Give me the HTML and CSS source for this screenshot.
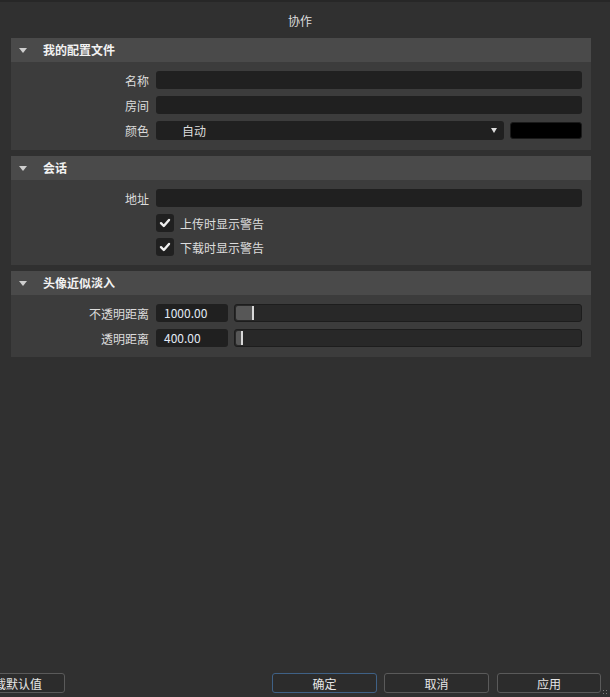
FILE: index.html
```html
<!DOCTYPE html>
<html lang="zh-CN">
<head>
  <meta charset="UTF-8" />
  <title>协作</title>
  <link rel="stylesheet" href="styles.css">
</head>
<body>
  <div class="dialog">
    <div class="topline"></div>
    <div class="title">协作</div>

    <div class="section">
      <div class="section-head"><span class="arrow"></span>我的配置文件</div>
      <div class="section-body">
        <div class="row">
          <label>名称</label>
          <div class="input"></div>
        </div>
        <div class="row">
          <label>房间</label>
          <div class="input"></div>
        </div>
        <div class="row row-tall">
          <label>颜色</label>
          <div class="color-ctrl">
            <div class="combo">自动<span class="combo-arrow"></span></div>
            <div class="swatch"></div>
          </div>
        </div>
      </div>
    </div>

    <div class="section">
      <div class="section-head"><span class="arrow"></span>会话</div>
      <div class="section-body session">
        <div class="row">
          <label>地址</label>
          <div class="input"></div>
        </div>
        <div class="row">
          <label></label>
          <div class="check"><span class="box"><svg viewBox="0 0 18 18" width="18" height="18"><path d="M5 9.2 L7.8 12 L13 6" fill="none" stroke="#eee" stroke-width="2.4" stroke-linecap="round" stroke-linejoin="round"/></svg></span>上传时显示警告</div>
        </div>
        <div class="row row-close">
          <label></label>
          <div class="check"><span class="box"><svg viewBox="0 0 18 18" width="18" height="18"><path d="M5 9.2 L7.8 12 L13 6" fill="none" stroke="#eee" stroke-width="2.4" stroke-linecap="round" stroke-linejoin="round"/></svg></span>下载时显示警告</div>
        </div>
      </div>
    </div>

    <div class="section">
      <div class="section-head"><span class="arrow"></span>头像近似淡入</div>
      <div class="section-body">
        <div class="row">
          <label>不透明距离</label>
          <div class="slider-ctrl">
            <div class="num">1000.00</div>
            <div class="slider"><div class="fill" style="width: 16px"></div><div class="handle"></div></div>
          </div>
        </div>
        <div class="row">
          <label>透明距离</label>
          <div class="slider-ctrl">
            <div class="num">400.00</div>
            <div class="slider"><div class="fill" style="width: 5px"></div><div class="handle"></div></div>
          </div>
        </div>
      </div>
    </div>

    <div class="footer">
      <button class="btn btn-defaults">载默认值</button>
      <div class="footer-right">
        <button class="btn btn-ok">确定</button>
        <button class="btn btn-cancel">取消</button>
        <button class="btn btn-apply">应用</button>
      </div>
    </div>
    <div class="grip"></div>
  </div>
</body>
</html>
```

FILE: styles.css
```css
body {
  margin: 0;
  background-color: #303030;
  color: #dcdcdc;
  font-family: "Noto Sans CJK SC", "Liberation Sans", sans-serif;
  font-size: 12px;
}
.dialog {
  height: 697px;
  display: flex;
  flex-direction: column;
  position: relative;
  overflow: hidden;
}
.topline {
  height: 2px;
  background-color: #272727;
}
.title {
  height: 36px;
  line-height: 38px;
  text-align: center;
  padding-right: 10px;
  color: #dedede;
}
.section {
  margin: 0 19px 6px 11px;
  background-color: #3c3c3c;
}
.section-head {
  height: 24px;
  line-height: 24px;
  background-color: #4a4a4a;
  color: #f2f2f2;
  font-weight: bold;
  display: flex;
  align-items: center;
}
.arrow {
  width: 0;
  height: 0;
  border-left: 4px solid transparent;
  border-right: 4px solid transparent;
  border-top: 5px solid #cfcfcf;
  margin: 0 16px 0 8px;
}
.section-body {
  padding: 9px 9px 10px 0;
  display: flex;
  flex-direction: column;
  gap: 7px;
}
.section-body.session {
  padding-bottom: 9px;
}
.row {
  display: flex;
  align-items: center;
  height: 18px;
}
.row-tall {
  height: 19px;
}
.row-close {
  margin-top: -1px;
}
.row label {
  width: 138px;
  flex-shrink: 0;
  text-align: right;
  margin-right: 7px;
  color: #dcdcdc;
}
.input {
  flex: 1;
  height: 18px;
  background-color: #202020;
  border-radius: 3px;
}
.color-ctrl {
  flex: 1;
  display: flex;
  gap: 6px;
  height: 19px;
}
.combo {
  width: 348px;
  background-color: #202020;
  border-radius: 3px;
  padding-left: 26px;
  box-sizing: border-box;
  line-height: 19px;
  position: relative;
}
.combo-arrow {
  position: absolute;
  right: 7px;
  top: 7px;
  border-left: 3.5px solid transparent;
  border-right: 3.5px solid transparent;
  border-top: 5px solid #dcdcdc;
}
.swatch {
  flex: 1;
  background-color: #000;
  border: 1px solid #1a1a1a;
  border-radius: 3px;
  margin-top: 1px;
  height: 15px;
}
.check {
  display: flex;
  align-items: center;
  gap: 6px;
}
.box {
  width: 18px;
  height: 18px;
  background-color: #202020;
  border-radius: 3px;
  display: flex;
}
.slider-ctrl {
  flex: 1;
  display: flex;
  gap: 6px;
  height: 18px;
}
.num {
  width: 72px;
  background-color: #202020;
  border-radius: 3px;
  padding-left: 8px;
  box-sizing: border-box;
  line-height: 18px;
  color: #e2eaf5;
}
.slider {
  flex: 1;
  background-color: #282828;
  border: 1px solid #1d1d1d;
  border-radius: 3px;
  display: flex;
  align-items: center;
  padding-left: 1px;
}
.fill {
  height: 14px;
  background-color: #575757;
  border-radius: 2px 0 0 2px;
}
.handle {
  width: 2px;
  height: 14px;
  background-color: #d8d8d8;
}
.footer {
  margin-top: auto;
  display: flex;
  justify-content: space-between;
  align-items: center;
  padding: 0 9px 4px 0;
}
.footer-right {
  display: flex;
}
.btn {
  height: 20px;
  width: 105px;
  background-color: #2c2c2c;
  border: 1px solid #5a5a5a;
  border-radius: 3px;
  color: #e6e6e6;
  font-family: inherit;
  font-size: 12px;
  padding: 0;
}
.btn-defaults {
  width: 80px;
  margin-left: -15px;
  text-align: right;
  padding-right: 22px;
  white-space: nowrap;
}
.btn-ok {
  border-color: #3f6186;
}
.btn-cancel {
  margin-left: 7px;
}
.btn-apply {
  width: 104px;
  margin-left: 8px;
}
.grip {
  position: absolute;
  right: 1px;
  bottom: 1px;
  width: 7px;
  height: 7px;
  background-image: radial-gradient(circle, #7a7a7a 0.8px, transparent 1px);
  background-size: 3px 3px;
}
```
